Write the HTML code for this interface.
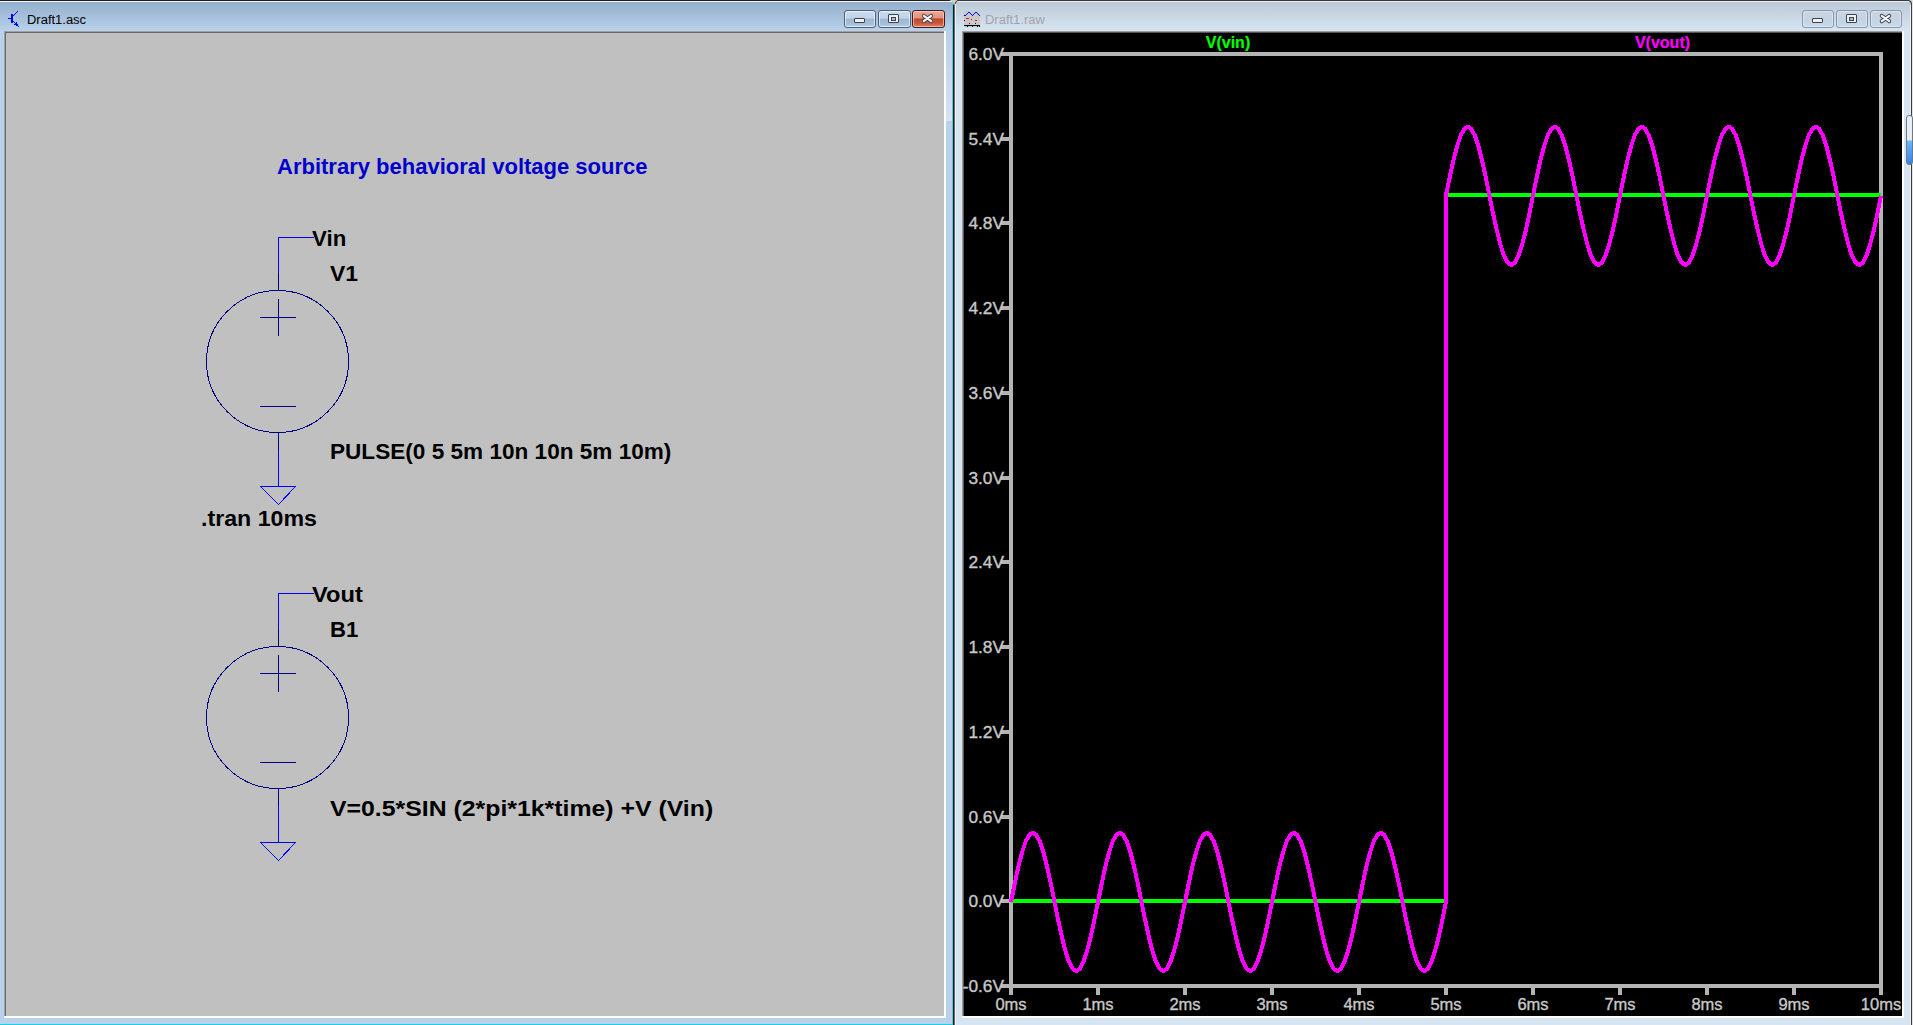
<!DOCTYPE html>
<html><head><meta charset="utf-8"><title>LTspice</title>
<style>
html,body{margin:0;padding:0;}
body{width:1913px;height:1025px;overflow:hidden;position:relative;background:#c8bfa0;font-family:"Liberation Sans",sans-serif;}
.a{position:absolute;}
svg{position:absolute;left:0;top:0;}
</style></head><body>

<div class="a" style="left:0;top:0;width:955px;height:1025px;background:#b9d1ea;"></div>
<div class="a" style="left:0;top:0;width:953px;height:1px;background:#1e1e1e;"></div>
<div class="a" style="left:0;top:1px;width:952px;height:1px;background:#f4f8fc;"></div>
<div class="a" style="left:0;top:2px;width:952px;height:29px;background:linear-gradient(#94afcc,#b9d1ea);"></div>
<div class="a" style="left:4px;top:31px;width:942px;height:987px;background:#ffffff;"></div>
<div class="a" style="left:4px;top:31px;width:940px;height:985px;background:#a0a0a0;"></div>
<div class="a" style="left:5px;top:32px;width:939px;height:984px;background:#696969;"></div>
<div class="a" style="left:6px;top:33px;width:938px;height:983px;background:#c0c0c0;"></div>
<div class="a" style="left:946px;top:31px;width:6px;height:90px;background:linear-gradient(#b8cfe8,#d6e4f3);"></div>
<div class="a" style="left:952px;top:2px;width:1px;height:1023px;background:#3fd0f0;"></div>
<div class="a" style="left:953px;top:0;width:1px;height:1025px;background:#1a1410;"></div>
<div class="a" style="left:954px;top:3px;width:1px;height:1022px;background:#6a6a6a;"></div>
<div class="a" style="left:0;top:1024px;width:953px;height:1px;background:#1ad0e4;"></div>
<div class="a" style="left:26.5px;top:12px;font-size:12px;line-height:16px;color:#000;transform:scaleX(1.08);transform-origin:0 0;">Draft1.asc</div>
<svg width="24" height="30" style="left:0;top:0" shape-rendering="crispEdges"><g fill="#0000ff"><rect x="8" y="18" width="1" height="1"/><rect x="9" y="18" width="1" height="1"/><rect x="10" y="18" width="1" height="1"/><rect x="11" y="14" width="1" height="1"/><rect x="11" y="15" width="1" height="1"/><rect x="11" y="16" width="1" height="1"/><rect x="11" y="17" width="1" height="1"/><rect x="11" y="18" width="1" height="1"/><rect x="11" y="19" width="1" height="1"/><rect x="11" y="20" width="1" height="1"/><rect x="11" y="21" width="1" height="1"/><rect x="11" y="22" width="1" height="1"/><rect x="12" y="14" width="1" height="1"/><rect x="12" y="15" width="1" height="1"/><rect x="12" y="16" width="1" height="1"/><rect x="12" y="17" width="1" height="1"/><rect x="12" y="18" width="1" height="1"/><rect x="12" y="19" width="1" height="1"/><rect x="12" y="20" width="1" height="1"/><rect x="12" y="21" width="1" height="1"/><rect x="12" y="22" width="1" height="1"/><rect x="13" y="15" width="1" height="1"/><rect x="14" y="14" width="1" height="1"/><rect x="15" y="13" width="1" height="1"/><rect x="16" y="12" width="1" height="1"/><rect x="17" y="11" width="1" height="1"/><rect x="13" y="21" width="1" height="1"/><rect x="14" y="22" width="1" height="1"/><rect x="15" y="23" width="1" height="1"/><rect x="16" y="23" width="1" height="1"/><rect x="16" y="22" width="1" height="1"/><rect x="14" y="24" width="1" height="1"/><rect x="15" y="24" width="1" height="1"/><rect x="16" y="24" width="1" height="1"/><rect x="17" y="24" width="1" height="1"/><rect x="16" y="25" width="1" height="1"/><rect x="17" y="25" width="1" height="1"/><rect x="18" y="26" width="1" height="1"/></g></svg>
<div class="a" style="left:844px;top:10px;width:30px;height:16px;border:1px solid #4e6078;border-radius:3px;background:linear-gradient(#c9dbee 0%,#bfd3ea 45%,#9cb6d3 50%,#a5bfdb 80%,#b7cde6 100%);box-shadow:inset 0 0 0 1px rgba(255,255,255,0.6);"></div><div class="a" style="left:854px;top:18px;width:9px;height:3px;background:#f0f0f0;border:1px solid #3c4250;border-radius:1px;"></div>
<div class="a" style="left:878px;top:10px;width:31px;height:16px;border:1px solid #4e6078;border-radius:3px;background:linear-gradient(#c9dbee 0%,#bfd3ea 45%,#9cb6d3 50%,#a5bfdb 80%,#b7cde6 100%);box-shadow:inset 0 0 0 1px rgba(255,255,255,0.6);"></div><div class="a" style="left:888px;top:14px;width:9px;height:7px;background:#f0f0f0;border:1px solid #3c4250;border-radius:1px;"></div><div class="a" style="left:891px;top:17px;width:3px;height:2px;background:#a8bcd4;border:1px solid #3c4250;"></div>
<div class="a" style="left:912px;top:10px;width:31px;height:16px;border:1px solid #4a1818;border-radius:3px;background:linear-gradient(#eaa996 0%,#e29580 42%,#c34a28 50%,#c8563a 75%,#d9836a 100%);box-shadow:inset 0 0 0 1px rgba(255,220,210,0.6);"></div><svg width="18" height="14" style="left:918px;top:11px"><path d="M5.8 4.8 L13.2 10.2 M13.2 4.8 L5.8 10.2" stroke="#3c4250" stroke-width="4.0" stroke-linecap="round"/><path d="M5.8 4.8 L13.2 10.2 M13.2 4.8 L5.8 10.2" stroke="#f4f4f4" stroke-width="2.2" stroke-linecap="round"/></svg>
<div class="a" style="left:955px;top:0;width:958px;height:1025px;background:#d7e4f2;"></div>
<div class="a" style="left:955px;top:0;width:956px;height:1px;background:#383838;"></div>
<div class="a" style="left:956px;top:1px;width:955px;height:1px;background:#e8eef5;"></div>
<div class="a" style="left:956px;top:2px;width:955px;height:29px;background:linear-gradient(#bccad8,#d7e4f2);"></div>
<div class="a" style="left:955px;top:2px;width:1px;height:1023px;background:#eef2f8;"></div>
<div class="a" style="left:962px;top:31px;width:942px;height:987px;background:#ffffff;"></div>
<div class="a" style="left:962px;top:31px;width:940px;height:985px;background:#a09c98;"></div>
<div class="a" style="left:963px;top:32px;width:939px;height:984px;background:#555;"></div>
<div class="a" style="left:964px;top:33px;width:938px;height:983px;background:#000;"></div>
<div class="a" style="left:1910px;top:5px;width:1px;height:1020px;background:#eef2fa;"></div>
<div class="a" style="left:1911px;top:4px;width:1px;height:1021px;background:#3c3c3c;"></div>
<div class="a" style="left:1912px;top:0;width:1px;height:1025px;background:#e4e4e4;"></div>
<svg width="8" height="8" style="left:1904px;top:0"><polygon points="3.5,0 8,0 8,4.5" fill="#d6d0bc"/><path d="M3.5 0.5 Q7.5 0.5 7.5 4.5" stroke="#3c3c3c" stroke-width="1.2" fill="none"/></svg>
<svg width="14" height="8" style="left:947px;top:0"><polygon points="2.5,0 11,0 8.5,2.5 8,4 7,5 6,4 5.5,2" fill="#d2ccb6"/><path d="M11 0.5 Q8.5 1 8.2 4" stroke="#3a3a3a" stroke-width="1" fill="none"/></svg>
<div class="a" style="left:1906px;top:115px;width:7px;height:50px;border:1px solid #777;border-radius:3px;background:linear-gradient(#e4eef8 0%,#e4eef8 50%,#6ab8ff 52%,#2f84f0 100%);box-sizing:border-box;"></div>
<div class="a" style="left:984.5px;top:12px;font-size:12px;line-height:16px;color:#a2a4a8;transform:scaleX(1.08);transform-origin:0 0;">Draft1.raw</div>
<svg width="22" height="22" style="left:962px;top:8px" shape-rendering="crispEdges"><rect x="2" y="3" width="16" height="16" fill="#c8c8c8"/><rect x="3" y="7" width="1" height="1" fill="#0000ff"/><rect x="4" y="6" width="1" height="1" fill="#0000ff"/><rect x="5" y="5" width="1" height="1" fill="#0000ff"/><rect x="6" y="4" width="1" height="1" fill="#0000ff"/><rect x="7" y="4" width="1" height="1" fill="#0000ff"/><rect x="8" y="5" width="1" height="1" fill="#0000ff"/><rect x="9" y="6" width="1" height="1" fill="#0000ff"/><rect x="10" y="7" width="1" height="1" fill="#0000ff"/><rect x="11" y="6" width="1" height="1" fill="#0000ff"/><rect x="12" y="5" width="1" height="1" fill="#0000ff"/><rect x="13" y="4" width="1" height="1" fill="#0000ff"/><rect x="14" y="4" width="1" height="1" fill="#0000ff"/><rect x="15" y="5" width="1" height="1" fill="#0000ff"/><rect x="16" y="6" width="1" height="1" fill="#0000ff"/><rect x="17" y="7" width="1" height="1" fill="#0000ff"/><rect x="2" y="7" width="1" height="1" fill="#000"/><rect x="2" y="12" width="1" height="1" fill="#000"/><rect x="2" y="17" width="1" height="1" fill="#000"/><rect x="3" y="17" width="1" height="1" fill="#000"/><rect x="4" y="17" width="1" height="1" fill="#000"/><rect x="5" y="17" width="1" height="1" fill="#000"/><rect x="6" y="17" width="1" height="1" fill="#000"/><rect x="7" y="17" width="1" height="1" fill="#000"/><rect x="8" y="17" width="1" height="1" fill="#000"/><rect x="9" y="17" width="1" height="1" fill="#000"/><rect x="10" y="17" width="1" height="1" fill="#000"/><rect x="11" y="17" width="1" height="1" fill="#000"/><rect x="12" y="17" width="1" height="1" fill="#000"/><rect x="13" y="17" width="1" height="1" fill="#000"/><rect x="14" y="17" width="1" height="1" fill="#000"/><rect x="15" y="17" width="1" height="1" fill="#000"/><rect x="16" y="17" width="1" height="1" fill="#000"/><rect x="17" y="17" width="1" height="1" fill="#000"/><rect x="5" y="18" width="1" height="1" fill="#000"/><rect x="10" y="18" width="1" height="1" fill="#000"/><rect x="15" y="18" width="1" height="1" fill="#000"/><rect x="17" y="18" width="1" height="1" fill="#000"/><rect x="4" y="10" width="1" height="1" fill="#ff0000"/><rect x="5" y="10" width="1" height="1" fill="#ff0000"/><rect x="6" y="10" width="1" height="1" fill="#ff0000"/><rect x="9" y="11" width="1" height="1" fill="#ff0000"/><rect x="13" y="12" width="1" height="1" fill="#ff0000"/><rect x="14" y="12" width="1" height="1" fill="#ff0000"/><rect x="7" y="15" width="1" height="1" fill="#000080"/><rect x="13" y="15" width="1" height="1" fill="#000080"/></svg>
<div class="a" style="left:1802px;top:10px;width:30px;height:16px;border:1px solid #8795ad;border-radius:3px;background:linear-gradient(#c8d6e4 0%,#c4d3e2 50%,#cad9e8 100%);box-shadow:inset 0 0 0 1px rgba(255,255,255,0.35);"></div><div class="a" style="left:1812px;top:18px;width:9px;height:3px;background:#f0f0f0;border:1px solid #3c4250;border-radius:1px;"></div>
<div class="a" style="left:1836px;top:10px;width:30px;height:16px;border:1px solid #8795ad;border-radius:3px;background:linear-gradient(#c8d6e4 0%,#c4d3e2 50%,#cad9e8 100%);box-shadow:inset 0 0 0 1px rgba(255,255,255,0.35);"></div><div class="a" style="left:1846px;top:14px;width:9px;height:7px;background:#f0f0f0;border:1px solid #3c4250;border-radius:1px;"></div><div class="a" style="left:1849px;top:17px;width:3px;height:2px;background:#a8bcd4;border:1px solid #3c4250;"></div>
<div class="a" style="left:1870px;top:10px;width:30px;height:16px;border:1px solid #8795ad;border-radius:3px;background:linear-gradient(#c8d6e4 0%,#c4d3e2 50%,#cad9e8 100%);box-shadow:inset 0 0 0 1px rgba(255,255,255,0.35);"></div><svg width="18" height="14" style="left:1876px;top:11px"><path d="M5.8 4.8 L13.2 10.2 M13.2 4.8 L5.8 10.2" stroke="#3c4250" stroke-width="4.0" stroke-linecap="round"/><path d="M5.8 4.8 L13.2 10.2 M13.2 4.8 L5.8 10.2" stroke="#f4f4f4" stroke-width="2.2" stroke-linecap="round"/></svg>
<svg width="1913" height="1025" shape-rendering="crispEdges"><path d="M278 237.5 H314 M278.5 237 V273" stroke="#0000ff" stroke-width="1" fill="none"/><path d="M278.5 273 V291" stroke="#000080" stroke-width="1" fill="none"/><circle cx="277.5" cy="361.5" r="71" stroke="#000080" stroke-width="1" fill="none"/><path d="M260 317.5 H296 M278.5 299 V336 M260 406.5 H296 M278.5 432 V450" stroke="#000080" stroke-width="1" fill="none"/><path d="M278.5 450 V486" stroke="#0000ff" stroke-width="1" fill="none"/><path d="M260.5 486.5 H295.5 L278.5 504.5 Z" stroke="#0000ff" stroke-width="1" fill="none"/><path d="M278 593.5 H314 M278.5 593 V629" stroke="#0000ff" stroke-width="1" fill="none"/><path d="M278.5 629 V647" stroke="#000080" stroke-width="1" fill="none"/><circle cx="277.5" cy="717.5" r="71" stroke="#000080" stroke-width="1" fill="none"/><path d="M260 673.5 H296 M278.5 655 V692 M260 762.5 H296 M278.5 788 V806" stroke="#000080" stroke-width="1" fill="none"/><path d="M278.5 806 V842" stroke="#0000ff" stroke-width="1" fill="none"/><path d="M260.5 842.5 H295.5 L278.5 860.5 Z" stroke="#0000ff" stroke-width="1" fill="none"/></svg>
<div class="a" style="left:277.03px;top:154.64px;font-size:22.75px;line-height:22.75px;font-weight:bold;color:#0000cc;white-space:pre;transform:scaleX(0.9671);transform-origin:0 0;">Arbitrary behavioral voltage source</div>
<div class="a" style="left:311.96px;top:226.64px;font-size:22.75px;line-height:22.75px;font-weight:bold;color:#000;white-space:pre;transform:scaleX(0.9796);transform-origin:0 0;">Vin</div>
<div class="a" style="left:329.96px;top:261.64px;font-size:22.75px;line-height:22.75px;font-weight:bold;color:#000;white-space:pre;transform:scaleX(1.0063);transform-origin:0 0;">V1</div>
<div class="a" style="left:330.05px;top:439.64px;font-size:22.75px;line-height:22.75px;font-weight:bold;color:#000;white-space:pre;transform:scaleX(0.9926);transform-origin:0 0;">PULSE(0 5 5m 10n 10n 5m 10m)</div>
<div class="a" style="left:201.01px;top:506.64px;font-size:22.75px;line-height:22.75px;font-weight:bold;color:#000;white-space:pre;transform:scaleX(1.0184);transform-origin:0 0;">.tran 10ms</div>
<div class="a" style="left:312.00px;top:582.64px;font-size:22.75px;line-height:22.75px;font-weight:bold;color:#000;white-space:pre;transform:scaleX(1.0388);transform-origin:0 0;">Vout</div>
<div class="a" style="left:329.82px;top:617.64px;font-size:22.75px;line-height:22.75px;font-weight:bold;color:#000;white-space:pre;transform:scaleX(0.9715);transform-origin:0 0;">B1</div>
<div class="a" style="left:330.02px;top:796.64px;font-size:22.75px;line-height:22.75px;font-weight:bold;color:#000;white-space:pre;transform:scaleX(1.0914);transform-origin:0 0;">V=0.5*SIN (2*pi*1k*time) +V (Vin)</div>
<svg width="1913" height="1025" shape-rendering="crispEdges"><rect x="1009" y="52" width="874" height="4" fill="#b4b4b4"/><rect x="1009" y="984" width="874" height="4" fill="#b4b4b4"/><rect x="1009" y="52" width="4" height="936" fill="#b4b4b4"/><rect x="1879" y="52" width="4" height="936" fill="#b4b4b4"/><rect x="1001" y="984" width="8" height="4" fill="#b4b4b4"/><rect x="1001" y="899" width="8" height="4" fill="#b4b4b4"/><rect x="1001" y="815" width="8" height="4" fill="#b4b4b4"/><rect x="1001" y="730" width="8" height="4" fill="#b4b4b4"/><rect x="1001" y="645" width="8" height="4" fill="#b4b4b4"/><rect x="1001" y="560" width="8" height="4" fill="#b4b4b4"/><rect x="1001" y="476" width="8" height="4" fill="#b4b4b4"/><rect x="1001" y="391" width="8" height="4" fill="#b4b4b4"/><rect x="1001" y="306" width="8" height="4" fill="#b4b4b4"/><rect x="1001" y="221" width="8" height="4" fill="#b4b4b4"/><rect x="1001" y="137" width="8" height="4" fill="#b4b4b4"/><rect x="1001" y="52" width="8" height="4" fill="#b4b4b4"/><rect x="1009" y="988" width="4" height="7" fill="#b4b4b4"/><rect x="1096" y="988" width="4" height="7" fill="#b4b4b4"/><rect x="1183" y="988" width="4" height="7" fill="#b4b4b4"/><rect x="1270" y="988" width="4" height="7" fill="#b4b4b4"/><rect x="1357" y="988" width="4" height="7" fill="#b4b4b4"/><rect x="1444" y="988" width="4" height="7" fill="#b4b4b4"/><rect x="1531" y="988" width="4" height="7" fill="#b4b4b4"/><rect x="1618" y="988" width="4" height="7" fill="#b4b4b4"/><rect x="1705" y="988" width="4" height="7" fill="#b4b4b4"/><rect x="1792" y="988" width="4" height="7" fill="#b4b4b4"/><rect x="1879" y="988" width="4" height="7" fill="#b4b4b4"/><polyline points="1011.0,901.2727272727273 1446.0,901.2727272727273 1446.0,195.21212121212125 1881.0,195.21212121212125" fill="none" stroke="#00ff00" stroke-width="4"/><polyline points="1011.0,901.9 1014.6,884.0 1018.2,867.3 1021.9,852.9 1025.5,841.9 1029.1,835.0 1032.8,832.7 1036.4,835.0 1040.0,841.9 1043.6,852.9 1047.2,867.3 1050.9,884.0 1054.5,901.9 1058.1,919.8 1061.8,936.5 1065.4,950.8 1069.0,961.8 1072.6,968.7 1076.2,971.1 1079.9,968.7 1083.5,961.8 1087.1,950.8 1090.8,936.5 1094.4,919.8 1098.0,901.9 1101.6,884.0 1105.2,867.3 1108.9,852.9 1112.5,841.9 1116.1,835.0 1119.8,832.7 1123.4,835.0 1127.0,841.9 1130.6,852.9 1134.2,867.3 1137.9,884.0 1141.5,901.9 1145.1,919.8 1148.8,936.5 1152.4,950.8 1156.0,961.8 1159.6,968.7 1163.2,971.1 1166.9,968.7 1170.5,961.8 1174.1,950.8 1177.8,936.5 1181.4,919.8 1185.0,901.9 1188.6,884.0 1192.2,867.3 1195.9,852.9 1199.5,841.9 1203.1,835.0 1206.8,832.7 1210.4,835.0 1214.0,841.9 1217.6,852.9 1221.2,867.3 1224.9,884.0 1228.5,901.9 1232.1,919.8 1235.8,936.5 1239.4,950.8 1243.0,961.8 1246.6,968.7 1250.2,971.1 1253.9,968.7 1257.5,961.8 1261.1,950.8 1264.8,936.5 1268.4,919.8 1272.0,901.9 1275.6,884.0 1279.2,867.3 1282.9,852.9 1286.5,841.9 1290.1,835.0 1293.8,832.7 1297.4,835.0 1301.0,841.9 1304.6,852.9 1308.2,867.3 1311.9,884.0 1315.5,901.9 1319.1,919.8 1322.8,936.5 1326.4,950.8 1330.0,961.8 1333.6,968.7 1337.2,971.1 1340.9,968.7 1344.5,961.8 1348.1,950.8 1351.8,936.5 1355.4,919.8 1359.0,901.9 1362.6,884.0 1366.2,867.3 1369.9,852.9 1373.5,841.9 1377.1,835.0 1380.8,832.7 1384.4,835.0 1388.0,841.9 1391.6,852.9 1395.2,867.3 1398.9,884.0 1402.5,901.9 1406.1,919.8 1409.8,936.5 1413.4,950.8 1417.0,961.8 1420.6,968.7 1424.2,971.1 1427.9,968.7 1431.5,961.8 1435.1,950.8 1438.8,936.5 1442.4,919.8 1446.0,901.3 1446.0,195.2 1449.6,177.9 1453.2,161.2 1456.9,146.9 1460.5,135.9 1464.1,129.0 1467.8,126.6 1471.4,129.0 1475.0,135.9 1478.6,146.9 1482.2,161.2 1485.9,177.9 1489.5,195.8 1493.1,213.7 1496.8,230.4 1500.4,244.7 1504.0,255.7 1507.6,262.6 1511.2,265.0 1514.9,262.6 1518.5,255.7 1522.1,244.7 1525.8,230.4 1529.4,213.7 1533.0,195.8 1536.6,177.9 1540.2,161.2 1543.9,146.9 1547.5,135.9 1551.1,129.0 1554.8,126.6 1558.4,129.0 1562.0,135.9 1565.6,146.9 1569.2,161.2 1572.9,177.9 1576.5,195.8 1580.1,213.7 1583.8,230.4 1587.4,244.7 1591.0,255.7 1594.6,262.6 1598.2,265.0 1601.9,262.6 1605.5,255.7 1609.1,244.7 1612.8,230.4 1616.4,213.7 1620.0,195.8 1623.6,177.9 1627.2,161.2 1630.9,146.9 1634.5,135.9 1638.1,129.0 1641.8,126.6 1645.4,129.0 1649.0,135.9 1652.6,146.9 1656.2,161.2 1659.9,177.9 1663.5,195.8 1667.1,213.7 1670.8,230.4 1674.4,244.7 1678.0,255.7 1681.6,262.6 1685.2,265.0 1688.9,262.6 1692.5,255.7 1696.1,244.7 1699.8,230.4 1703.4,213.7 1707.0,195.8 1710.6,177.9 1714.2,161.2 1717.9,146.9 1721.5,135.9 1725.1,129.0 1728.8,126.6 1732.4,129.0 1736.0,135.9 1739.6,146.9 1743.2,161.2 1746.9,177.9 1750.5,195.8 1754.1,213.7 1757.8,230.4 1761.4,244.7 1765.0,255.7 1768.6,262.6 1772.2,265.0 1775.9,262.6 1779.5,255.7 1783.1,244.7 1786.8,230.4 1790.4,213.7 1794.0,195.8 1797.6,177.9 1801.2,161.2 1804.9,146.9 1808.5,135.9 1812.1,129.0 1815.8,126.6 1819.4,129.0 1823.0,135.9 1826.6,146.9 1830.2,161.2 1833.9,177.9 1837.5,195.8 1841.1,213.7 1844.8,230.4 1848.4,244.7 1852.0,255.7 1855.6,262.6 1859.2,265.0 1862.9,262.6 1866.5,255.7 1870.1,244.7 1873.8,230.4 1877.4,213.7 1881.0,195.8" fill="none" stroke="#ff00ff" stroke-width="4" stroke-linejoin="round" shape-rendering="crispEdges"/></svg>
<div class="a" style="left:1128.00px;width:200px;text-align:center;top:34.52px;font-size:16px;line-height:16px;font-weight:bold;color:#00ff00;white-space:pre;transform:scaleX(1.0);transform-origin:100px 0;-webkit-text-stroke:0.2px #00ff00;">V(vin)</div>
<div class="a" style="left:1562.50px;width:200px;text-align:center;top:34.52px;font-size:16px;line-height:16px;font-weight:bold;color:#ff00ff;white-space:pre;transform:scaleX(1.0);transform-origin:100px 0;-webkit-text-stroke:0.2px #ff00ff;">V(vout)</div>
<div class="a" style="left:803.50px;width:200px;text-align:right;top:978.52px;font-size:16px;line-height:16px;font-weight:normal;color:#c8c8c8;white-space:pre;transform:scaleX(1.08);transform-origin:200px 0;-webkit-text-stroke:0.35px #c8c8c8;">-0.6V</div>
<div class="a" style="left:803.50px;width:200px;text-align:right;top:893.52px;font-size:16px;line-height:16px;font-weight:normal;color:#c8c8c8;white-space:pre;transform:scaleX(1.08);transform-origin:200px 0;-webkit-text-stroke:0.35px #c8c8c8;">0.0V</div>
<div class="a" style="left:803.50px;width:200px;text-align:right;top:809.52px;font-size:16px;line-height:16px;font-weight:normal;color:#c8c8c8;white-space:pre;transform:scaleX(1.08);transform-origin:200px 0;-webkit-text-stroke:0.35px #c8c8c8;">0.6V</div>
<div class="a" style="left:803.50px;width:200px;text-align:right;top:724.52px;font-size:16px;line-height:16px;font-weight:normal;color:#c8c8c8;white-space:pre;transform:scaleX(1.08);transform-origin:200px 0;-webkit-text-stroke:0.35px #c8c8c8;">1.2V</div>
<div class="a" style="left:803.50px;width:200px;text-align:right;top:639.52px;font-size:16px;line-height:16px;font-weight:normal;color:#c8c8c8;white-space:pre;transform:scaleX(1.08);transform-origin:200px 0;-webkit-text-stroke:0.35px #c8c8c8;">1.8V</div>
<div class="a" style="left:803.50px;width:200px;text-align:right;top:554.52px;font-size:16px;line-height:16px;font-weight:normal;color:#c8c8c8;white-space:pre;transform:scaleX(1.08);transform-origin:200px 0;-webkit-text-stroke:0.35px #c8c8c8;">2.4V</div>
<div class="a" style="left:803.50px;width:200px;text-align:right;top:470.52px;font-size:16px;line-height:16px;font-weight:normal;color:#c8c8c8;white-space:pre;transform:scaleX(1.08);transform-origin:200px 0;-webkit-text-stroke:0.35px #c8c8c8;">3.0V</div>
<div class="a" style="left:803.50px;width:200px;text-align:right;top:385.52px;font-size:16px;line-height:16px;font-weight:normal;color:#c8c8c8;white-space:pre;transform:scaleX(1.08);transform-origin:200px 0;-webkit-text-stroke:0.35px #c8c8c8;">3.6V</div>
<div class="a" style="left:803.50px;width:200px;text-align:right;top:300.52px;font-size:16px;line-height:16px;font-weight:normal;color:#c8c8c8;white-space:pre;transform:scaleX(1.08);transform-origin:200px 0;-webkit-text-stroke:0.35px #c8c8c8;">4.2V</div>
<div class="a" style="left:803.50px;width:200px;text-align:right;top:215.52px;font-size:16px;line-height:16px;font-weight:normal;color:#c8c8c8;white-space:pre;transform:scaleX(1.08);transform-origin:200px 0;-webkit-text-stroke:0.35px #c8c8c8;">4.8V</div>
<div class="a" style="left:803.50px;width:200px;text-align:right;top:131.52px;font-size:16px;line-height:16px;font-weight:normal;color:#c8c8c8;white-space:pre;transform:scaleX(1.08);transform-origin:200px 0;-webkit-text-stroke:0.35px #c8c8c8;">5.4V</div>
<div class="a" style="left:803.50px;width:200px;text-align:right;top:46.52px;font-size:16px;line-height:16px;font-weight:normal;color:#c8c8c8;white-space:pre;transform:scaleX(1.08);transform-origin:200px 0;-webkit-text-stroke:0.35px #c8c8c8;">6.0V</div>
<div class="a" style="left:911.00px;width:200px;text-align:center;top:996.52px;font-size:16px;line-height:16px;font-weight:normal;color:#c8c8c8;white-space:pre;transform:scaleX(1.03);transform-origin:100px 0;-webkit-text-stroke:0.35px #c8c8c8;">0ms</div>
<div class="a" style="left:998.00px;width:200px;text-align:center;top:996.52px;font-size:16px;line-height:16px;font-weight:normal;color:#c8c8c8;white-space:pre;transform:scaleX(1.03);transform-origin:100px 0;-webkit-text-stroke:0.35px #c8c8c8;">1ms</div>
<div class="a" style="left:1085.00px;width:200px;text-align:center;top:996.52px;font-size:16px;line-height:16px;font-weight:normal;color:#c8c8c8;white-space:pre;transform:scaleX(1.03);transform-origin:100px 0;-webkit-text-stroke:0.35px #c8c8c8;">2ms</div>
<div class="a" style="left:1172.00px;width:200px;text-align:center;top:996.52px;font-size:16px;line-height:16px;font-weight:normal;color:#c8c8c8;white-space:pre;transform:scaleX(1.03);transform-origin:100px 0;-webkit-text-stroke:0.35px #c8c8c8;">3ms</div>
<div class="a" style="left:1259.00px;width:200px;text-align:center;top:996.52px;font-size:16px;line-height:16px;font-weight:normal;color:#c8c8c8;white-space:pre;transform:scaleX(1.03);transform-origin:100px 0;-webkit-text-stroke:0.35px #c8c8c8;">4ms</div>
<div class="a" style="left:1346.00px;width:200px;text-align:center;top:996.52px;font-size:16px;line-height:16px;font-weight:normal;color:#c8c8c8;white-space:pre;transform:scaleX(1.03);transform-origin:100px 0;-webkit-text-stroke:0.35px #c8c8c8;">5ms</div>
<div class="a" style="left:1433.00px;width:200px;text-align:center;top:996.52px;font-size:16px;line-height:16px;font-weight:normal;color:#c8c8c8;white-space:pre;transform:scaleX(1.03);transform-origin:100px 0;-webkit-text-stroke:0.35px #c8c8c8;">6ms</div>
<div class="a" style="left:1520.00px;width:200px;text-align:center;top:996.52px;font-size:16px;line-height:16px;font-weight:normal;color:#c8c8c8;white-space:pre;transform:scaleX(1.03);transform-origin:100px 0;-webkit-text-stroke:0.35px #c8c8c8;">7ms</div>
<div class="a" style="left:1607.00px;width:200px;text-align:center;top:996.52px;font-size:16px;line-height:16px;font-weight:normal;color:#c8c8c8;white-space:pre;transform:scaleX(1.03);transform-origin:100px 0;-webkit-text-stroke:0.35px #c8c8c8;">8ms</div>
<div class="a" style="left:1694.00px;width:200px;text-align:center;top:996.52px;font-size:16px;line-height:16px;font-weight:normal;color:#c8c8c8;white-space:pre;transform:scaleX(1.03);transform-origin:100px 0;-webkit-text-stroke:0.35px #c8c8c8;">9ms</div>
<div class="a" style="left:1781.00px;width:200px;text-align:center;top:996.52px;font-size:16px;line-height:16px;font-weight:normal;color:#c8c8c8;white-space:pre;transform:scaleX(1.03);transform-origin:100px 0;-webkit-text-stroke:0.35px #c8c8c8;">10ms</div>
</body></html>
